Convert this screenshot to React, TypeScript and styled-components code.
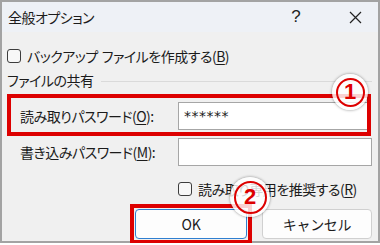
import React from 'react'
import styled, { createGlobalStyle } from 'styled-components'

const GlobalStyle = createGlobalStyle`
  html, body {
    margin: 0;
    padding: 0;
    background: #ffffff;
  }
  body {
    font-family: "Noto Sans CJK JP", "Noto Sans", sans-serif;
    font-feature-settings: "palt";
    color: #1b1b1b;
  }
`

const Window = styled.div`
  width: 380px;
  height: 243px;
  box-sizing: border-box;
  border: 2px solid #a3a3a3;
  background: #f0f0f0;
  display: flex;
  flex-direction: column;
`

const TitleBar = styled.div`
  height: 30px;
  flex: none;
  background: #eef1f6;
  display: flex;
  align-items: center;
`

const Title = styled.div`
  flex: 1;
  padding-left: 6px;
  font-size: 14px;
  letter-spacing: -0.5px;
  line-height: 30px;
`

const TitleButton = styled.div<{ $gap?: number }>`
  width: 46px;
  height: 30px;
  margin-right: ${p => p.$gap ?? 0}px;
  display: flex;
  align-items: center;
  justify-content: center;
  font-family: "Liberation Sans", sans-serif;
  font-size: 17px;
  color: #222;
`

const Body = styled.div`
  flex: 1;
  display: flex;
  flex-direction: column;
  padding: 14px 6px 0 5px;
`

const CheckRow = styled.label<{ $indent?: number; $top?: number }>`
  display: flex;
  align-items: center;
  height: 20px;
  gap: 6px;
  padding-left: ${p => p.$indent ?? 0}px;
  margin-top: ${p => p.$top ?? 0}px;
  font-size: 14px;
  letter-spacing: -0.5px;
  white-space: nowrap;
`

const CheckBox = styled.span`
  width: 14px;
  height: 14px;
  box-sizing: border-box;
  border: 1px solid #3c3c3c;
  border-radius: 3px;
  background: #f7f7f7;
  flex: none;
`

const Key = styled.span`
  text-decoration: underline;
  text-underline-offset: 2px;
`

const WordGap = styled.span`
  display: inline-block;
  width: 4px;
`

const GroupHead = styled.div`
  display: flex;
  align-items: center;
  height: 20px;
  margin-top: 4px;
  gap: 8px;
  font-size: 14px;
  letter-spacing: -0.5px;
  &::after {
    content: '';
    flex: 1;
    height: 1px;
    margin-top: 3px;
    background: #dadada;
  }
`

const FieldRow = styled.div<{ $marked?: boolean; $top: number }>`
  position: relative;
  display: flex;
  align-items: center;
  margin: ${p => p.$top}px 5px 0 4px;
  padding: 4px 0 2px 9px;
  outline: ${p => (p.$marked ? '4px solid #dd0000' : 'none')};
`

const FieldLabel = styled.div`
  width: 158px;
  font-size: 14px;
  letter-spacing: -0.5px;
  white-space: nowrap;
`

const TextBox = styled.input<{ $pull: number }>`
  flex: 1;
  min-width: 0;
  height: 28px;
  margin-right: -${p => p.$pull}px;
  box-sizing: border-box;
  border: 1px solid #a6a6a6;
  background: #ffffff;
  padding: 0 5px;
  font-family: "DejaVu Sans", sans-serif;
  font-size: 14px;
  letter-spacing: 0.5px;
  color: #1b1b1b;
  outline: none;
`

const ButtonRow = styled.div`
  display: flex;
  justify-content: flex-end;
  gap: 15px;
  margin-top: 10px;
`

const ButtonSlot = styled.div<{ $marked?: boolean }>`
  position: relative;
  outline: ${p => (p.$marked ? '4px solid #dd0000' : 'none')};
  outline-offset: 1px;
`

const DialogButton = styled.button<{ $primary?: boolean; $width: number }>`
  display: block;
  width: ${p => p.$width}px;
  height: 30px;
  border-radius: 4px;
  border: 1px solid ${p => (p.$primary ? '#2f7fd0' : '#d0d0d0')};
  background: #fdfdfd;
  font-family: inherit;
  font-size: 14px;
  letter-spacing: -0.3px;
  color: #1b1b1b;
  padding: 0;
`

const Badge = styled.div<{ $size: number; $left: number; $top: number }>`
  position: absolute;
  left: ${p => p.$left}px;
  top: ${p => p.$top}px;
  width: ${p => p.$size}px;
  height: ${p => p.$size}px;
  border-radius: 50%;
  background: rgba(255, 255, 255, 0.82);
  box-shadow: 0 0 3px rgba(0, 0, 0, 0.45);
  display: flex;
  align-items: center;
  justify-content: center;
  z-index: 2;
`

const BadgeRing = styled.div<{ $size: number }>`
  width: ${p => p.$size}px;
  height: ${p => p.$size}px;
  box-sizing: border-box;
  border: 2.5px solid #dd0000;
  border-radius: 50%;
  display: flex;
  align-items: center;
  justify-content: center;
  font-family: "Liberation Sans", sans-serif;
  font-weight: 700;
  font-size: 22px;
  letter-spacing: 0;
  color: #dd0000;
`

const Step: React.FC<{ n: number; size: number; left: number; top: number }> = ({ n, size, left, top }) => (
  <Badge $size={size} $left={left} $top={top}>
    <BadgeRing $size={size - 7}>{n}</BadgeRing>
  </Badge>
)

const App: React.FC = () => {
  return (
    <>
      <GlobalStyle />
      <Window>
        <TitleBar>
          <Title>全般オプション</Title>
          <TitleButton $gap={13}>?</TitleButton>
          <TitleButton>
            <svg width="13" height="13" viewBox="0 0 13 13">
              <path d="M1 1 L12 12 M12 1 L1 12" stroke="#222" strokeWidth="1.2" fill="none" />
            </svg>
          </TitleButton>
        </TitleBar>
        <Body>
          <CheckRow>
            <CheckBox />
            <span>バックアップ<WordGap />ファイルを作成する(<Key>B</Key>)</span>
          </CheckRow>
          <GroupHead>ファイルの共有</GroupHead>
          <FieldRow $marked $top={8}>
            <FieldLabel>読み取りパスワード(<Key>O</Key>):</FieldLabel>
            <TextBox $pull={3} readOnly value="******" />
            <Step n={1} size={36} left={321} top={-24} />
          </FieldRow>
          <FieldRow $top={2}>
            <FieldLabel>書き込みパスワード(<Key>M</Key>):</FieldLabel>
            <TextBox $pull={5} readOnly value="" />
          </FieldRow>
          <CheckRow $indent={171} $top={11}>
            <CheckBox />
            <span>読み取り専用を推奨する(<Key>R</Key>)</span>
          </CheckRow>
          <ButtonRow>
            <ButtonSlot $marked>
              <DialogButton $primary $width={112}>OK</DialogButton>
              <Step n={2} size={40} left={95} top={-32} />
            </ButtonSlot>
            <DialogButton $width={110}>キャンセル</DialogButton>
          </ButtonRow>
        </Body>
      </Window>
    </>
  )
}

export default App
